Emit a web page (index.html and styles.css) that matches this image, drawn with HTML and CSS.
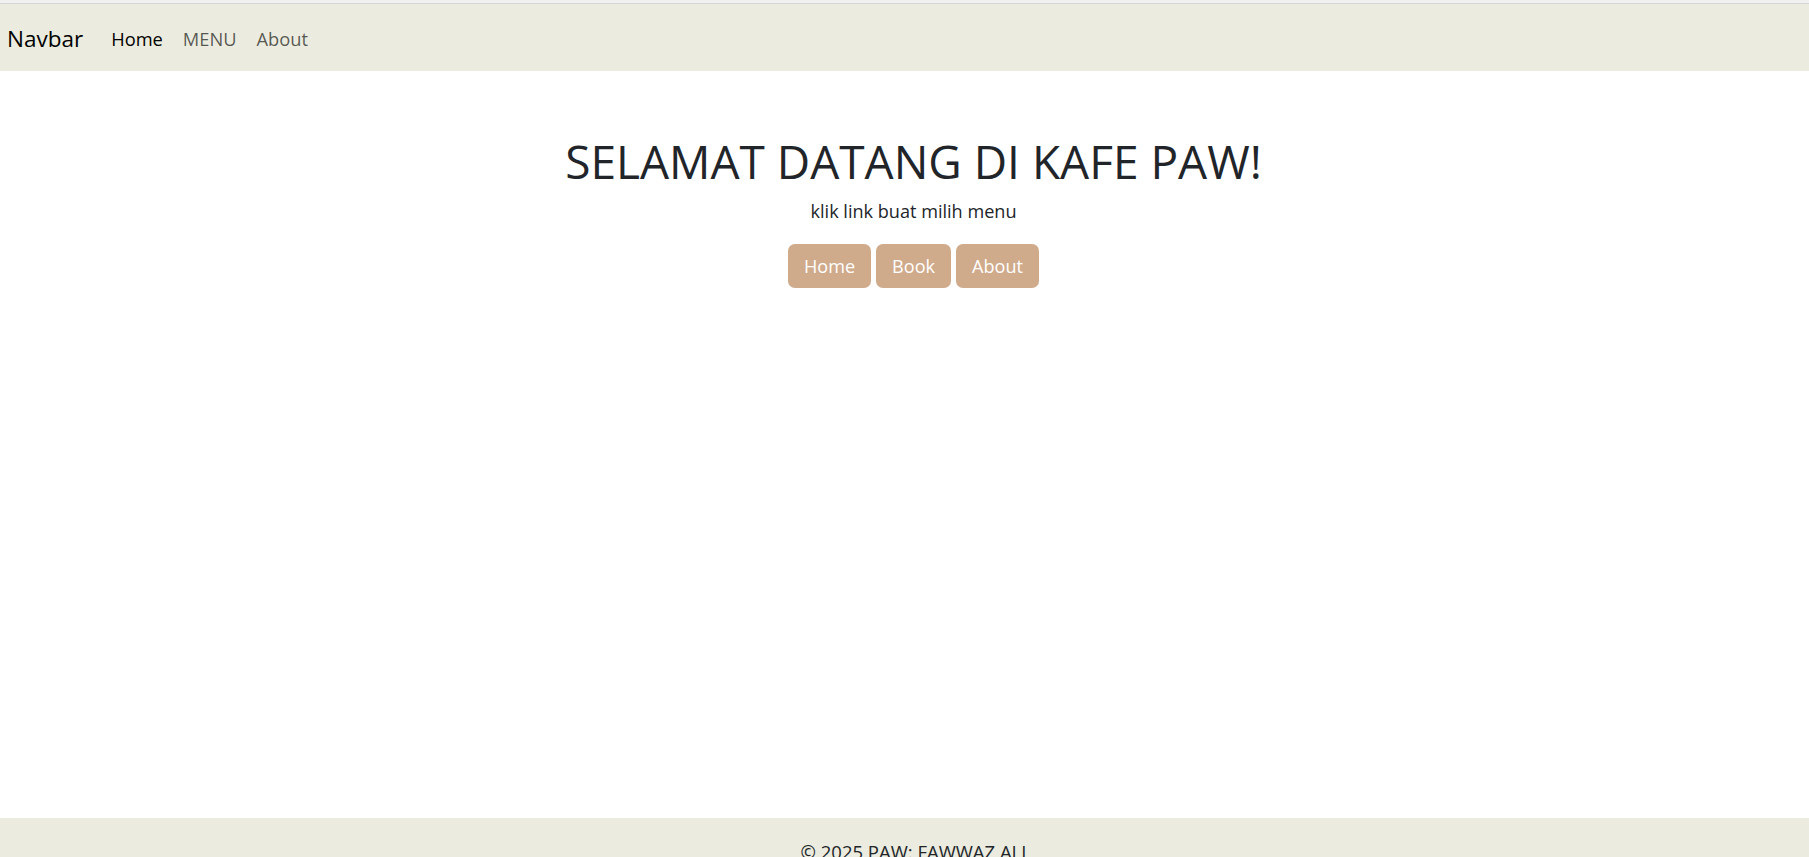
FILE: index.html
```html
<!DOCTYPE html>
<html lang="id">
<head>
<meta charset="utf-8">
<title>Kafe PAW</title>
<link rel="stylesheet" href="styles.css">
</head>
<body>
<div class="chrome"></div>
<nav class="navbar">
  <a class="brand" href="#">Navbar</a>
  <ul class="nav-links">
    <li><a class="nav-link active" href="#">Home</a></li>
    <li><a class="nav-link" href="#">MENU</a></li>
    <li><a class="nav-link" href="#">About</a></li>
  </ul>
</nav>
<main class="main">
  <h1 class="title">SELAMAT DATANG DI KAFE PAW!</h1>
  <p class="lead">klik link buat milih menu</p>
  <div class="actions">
    <a class="btn" href="#">Home</a>
    <a class="btn" href="#">Book</a>
    <a class="btn" href="#">About</a>
  </div>
</main>
<footer class="footer">
  <p class="copy">© 2025 PAW: FAWWAZ ALI</p>
</footer>
</body>
</html>
```
FILE: styles.css
```css
* { box-sizing: border-box; }
html, body { margin: 0; padding: 0; }
body {
  font-family: "Open Sans", "Noto Sans", sans-serif;
  color: #212529;
  background: #fff;
  font-size: 19.2px;
  line-height: 1.5;
}
.chrome {
  height: 4px;
  background: #f0f0f0;
  border-bottom: 1px solid #d6d6d6;
}
.navbar {
  height: 67px;
  background: #ebecdf;
  display: flex;
  align-items: center;
  padding: 3px 7px 0;
}
.brand {
  font-size: 22.5px;
  color: #000;
  text-decoration: none;
  margin-right: 18px;
}
.nav-links {
  list-style: none;
  margin: 0;
  padding: 0;
  display: flex;
}
.nav-link {
  display: block;
  padding: 8px 10px;
  font-size: 18.3px;
  color: rgba(0,0,0,0.65);
  text-decoration: none;
}
.nav-link.active { color: #000; }
.main {
  min-height: 747px;
  padding: 63px 0 0 18px;
  text-align: center;
}
.title {
  margin: 0 0 9px;
  font-size: 46px;
  font-weight: 400;
  line-height: 1.2;
}
.lead {
  margin: 0 0 19px;
  font-size: 18.1px;
}
.actions {
  display: flex;
  justify-content: center;
  gap: 5px;
}
.btn {
  display: block;
  height: 44px;
  padding: 0 16px;
  line-height: 44px;
  font-size: 18.1px;
  color: #fff;
  background: #cfaa8b;
  border-radius: 7px;
  text-decoration: none;
}
.footer {
  background: #ebecdf;
  padding: 20px 0 19px 18px;
  text-align: center;
}
.copy { margin: 0; font-size: 18.5px; }
```
